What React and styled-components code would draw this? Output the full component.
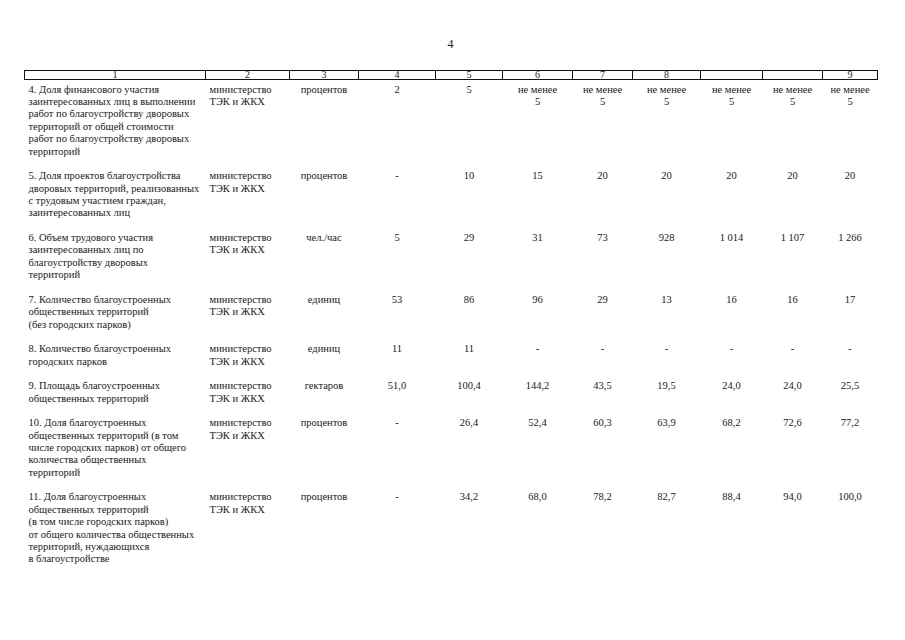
import React from "react";
import styled, { createGlobalStyle } from "styled-components";

const Global = createGlobalStyle`
  html, body { margin: 0; padding: 0; background: #fff; }
  body, table, th, td { font-family: "Liberation Serif", "Times New Roman", serif; color: #1a1a1a; }
`;

const Page = styled.div`
  width: 905px;
  height: 640px;
  box-sizing: border-box;
  padding: 37px 28px 0 24px;
  background: #fff;
`;

const PageNumber = styled.div`
  width: 853px;
  text-align: center;
  font-size: 12px;
  line-height: 14px;
  height: 33px;
`;

const Table = styled.table`
  border-collapse: collapse;
  table-layout: fixed;
  width: 853px;
  font-family: "Liberation Serif", "Times New Roman", serif;
  font-size: 10.5px;
`;

const HeadCell = styled.th`
  border: 1px solid #111;
  border-top-width: 1.5px;
  border-bottom-width: 1.5px;
  font-weight: normal;
  text-align: center;
  font-size: 10px;
  line-height: 8px;
  height: 8px;
  padding: 0;
`;

const Cell = styled.td`
  vertical-align: top;
  padding: ${(p) => (p.$first ? "3.5px" : "0")} 4px 12.2px;
  line-height: 12.4px;
  white-space: nowrap;
  text-align: ${(p) => p.$align || "center"};
`;

const widths = [181, 84, 69, 77, 67, 70, 60, 68, 62, 60, 55];
const heads = ["1", "2", "3", "4", "5", "6", "7", "8", "", "", "9"];

const rows = [
  {
    name: [
      "4. Доля финансового участия",
      "заинтересованных лиц в выполнении",
      "работ по благоустройству дворовых",
      "территорий от общей стоимости",
      "работ по благоустройству дворовых",
      "территорий",
    ],
    unit: "процентов",
    vals: [["2"], ["5"], ["не менее", "5"], ["не менее", "5"], ["не менее", "5"], ["не менее", "5"], ["не менее", "5"], ["не менее", "5"]],
  },
  {
    name: [
      "5. Доля проектов благоустройства",
      "дворовых территорий, реализованных",
      "с трудовым участием граждан,",
      "заинтересованных лиц",
    ],
    unit: "процентов",
    vals: [["-"], ["10"], ["15"], ["20"], ["20"], ["20"], ["20"], ["20"]],
  },
  {
    name: [
      "6. Объем трудового участия",
      "заинтересованных лиц по",
      "благоустройству дворовых",
      "территорий",
    ],
    unit: "чел./час",
    vals: [["5"], ["29"], ["31"], ["73"], ["928"], ["1 014"], ["1 107"], ["1 266"]],
  },
  {
    name: [
      "7. Количество благоустроенных",
      "общественных территорий",
      "(без городских парков)",
    ],
    unit: "единиц",
    vals: [["53"], ["86"], ["96"], ["29"], ["13"], ["16"], ["16"], ["17"]],
  },
  {
    name: ["8. Количество благоустроенных", "городских парков"],
    unit: "единиц",
    vals: [["11"], ["11"], ["-"], ["-"], ["-"], ["-"], ["-"], ["-"]],
  },
  {
    name: ["9. Площадь благоустроенных", "общественных территорий"],
    unit: "гектаров",
    vals: [["51,0"], ["100,4"], ["144,2"], ["43,5"], ["19,5"], ["24,0"], ["24,0"], ["25,5"]],
  },
  {
    name: [
      "10. Доля благоустроенных",
      "общественных территорий (в том",
      "числе городских парков) от общего",
      "количества общественных",
      "территорий",
    ],
    unit: "процентов",
    vals: [["-"], ["26,4"], ["52,4"], ["60,3"], ["63,9"], ["68,2"], ["72,6"], ["77,2"]],
  },
  {
    name: [
      "11. Доля благоустроенных",
      "общественных территорий",
      "(в том числе городских парков)",
      "от общего количества общественных",
      "территорий, нуждающихся",
      "в благоустройстве",
    ],
    unit: "процентов",
    vals: [["-"], ["34,2"], ["68,0"], ["78,2"], ["82,7"], ["88,4"], ["94,0"], ["100,0"]],
  },
];

const Lines = ({ lines }) =>
  lines.map((l, i) => (
    <React.Fragment key={i}>
      {i > 0 && <br />}
      {l}
    </React.Fragment>
  ));

export default function App() {
  return (
    <>
      <Global />
      <Page>
        <PageNumber>4</PageNumber>
        <Table>
          <colgroup>
            {widths.map((w, i) => (
              <col key={i} style={{ width: w }} />
            ))}
          </colgroup>
          <thead>
            <tr>
              {heads.map((h, i) => (
                <HeadCell key={i}>{h}</HeadCell>
              ))}
            </tr>
          </thead>
          <tbody>
            {rows.map((r, ri) => (
              <tr key={ri}>
                <Cell $first={ri === 0} $align="left">
                  <Lines lines={r.name} />
                </Cell>
                <Cell $first={ri === 0} $align="left">
                  министерство
                  <br />
                  ТЭК и ЖКХ
                </Cell>
                <Cell $first={ri === 0}>{r.unit}</Cell>
                {r.vals.map((v, vi) => (
                  <Cell key={vi} $first={ri === 0}>
                    <Lines lines={v} />
                  </Cell>
                ))}
              </tr>
            ))}
          </tbody>
        </Table>
      </Page>
    </>
  );
}
